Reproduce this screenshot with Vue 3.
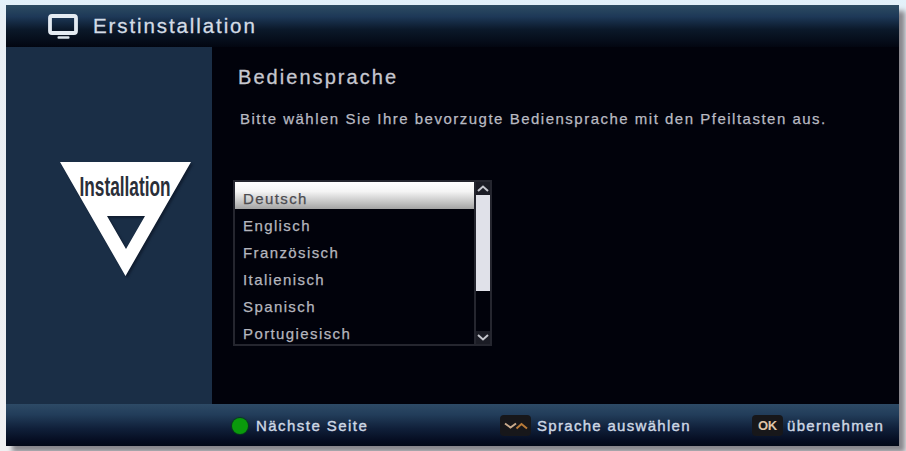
<template>
  <div class="page">
    <div class="screen">
      <header class="top-bar">
        <svg class="tv-icon" viewBox="0 0 30 26" width="30" height="26">
          <rect x="2" y="2" width="26" height="17" rx="2" fill="none" stroke="#e4ebf2" stroke-width="3.8" />
          <rect x="9.5" y="22.2" width="12" height="2.6" rx="1" fill="#dbe3ea" />
        </svg>
        <h1>Erstinstallation</h1>
      </header>

      <div class="body">
        <aside class="sidebar">
          <svg class="logo" viewBox="0 0 140 124" width="140" height="124">
            <path class="logo-shape" d="M5 5H136L70.500 119ZM52 59L71 92L90 59Z" fill="#fff" fill-rule="evenodd" />
            <text x="24.5" y="39" textLength="91" lengthAdjust="spacingAndGlyphs">Installation</text>
          </svg>
        </aside>

        <main class="content">
          <h2>Bediensprache</h2>
          <p class="hint">Bitte wählen Sie Ihre bevorzugte Bediensprache mit den Pfeiltasten aus.</p>

          <div class="list-box">
            <ul class="languages">
              <li
                v-for="(lang, index) in languages"
                :key="lang"
                :class="{ active: index === selected }"
                @click="selected = index"
              >
                {{ lang }}
              </li>
            </ul>
            <div class="scrollbar">
              <svg viewBox="0 0 14 13" width="14" height="13">
                <path d="M2 9L7 4.500L12 9" />
              </svg>
              <div class="track">
                <div class="thumb"></div>
              </div>
              <svg viewBox="0 0 14 13" width="14" height="13">
                <path d="M2 4L7 8.500L12 4" />
              </svg>
            </div>
          </div>
        </main>
      </div>

      <footer class="bottom-bar">
        <div class="action next">
          <span class="dot"></span>
          <span class="label">Nächste Seite</span>
        </div>
        <div class="action choose">
          <span class="key">
            <svg viewBox="0 0 24 10" width="24" height="10">
              <path d="M1 2.500L6.500 6.500L12 2.500" stroke="#c9aa8c" />
              <path d="M12.500 7.500L17.500 3L23 7.500" stroke="#b87a38" />
            </svg>
          </span>
          <span class="label">Sprache auswählen</span>
        </div>
        <div class="action accept">
          <span class="key ok">OK</span>
          <span class="label">übernehmen</span>
        </div>
      </footer>
    </div>
  </div>
</template>

<script setup>
import { ref, onMounted, onUnmounted } from 'vue'

const languages = ['Deutsch', 'Englisch', 'Französisch', 'Italienisch', 'Spanisch', 'Portugiesisch']
const selected = ref(0)

function handleKeydown(event) {
  if (event.key === 'ArrowDown') {
    selected.value = Math.min(selected.value + 1, languages.length - 1)
  } else if (event.key === 'ArrowUp') {
    selected.value = Math.max(selected.value - 1, 0)
  }
}

onMounted(() => {
  document.addEventListener('keydown', handleKeydown)
})

onUnmounted(() => {
  document.removeEventListener('keydown', handleKeydown)
})
</script>

<style>
body {
  margin: 0;
  overflow: hidden;
}
</style>

<style scoped>
.page {
  box-sizing: border-box;
  width: 906px;
  height: 451px;
  padding: 5px 7px 5px 6px;
  overflow: hidden;
  background: linear-gradient(180deg, #e2f1fa 0, #e8eef4 20px, #f0f0f2 100%);
  font-family: "Liberation Sans", Arial, sans-serif;
}

.screen {
  display: flex;
  flex-direction: column;
  width: 893px;
  height: 441px;
  background: #01020b;
  box-shadow: 6px 6px 5px 0 #88868c;
}

.top-bar {
  display: flex;
  align-items: flex-start;
  height: 42px;
  background: linear-gradient(180deg, #2d4c62 0%, #1d3857 28%, #0b192a 58%, #020611 100%);
}

.tv-icon {
  margin: 9px 0 0 42px;
}

h1 {
  margin: 9px 0 0 15px;
  font-size: 20.5px;
  font-weight: 400;
  line-height: 24px;
  letter-spacing: 1.9px;
  color: #d3dce6;
  -webkit-text-stroke: 0.3px #d3dce6;
}

.body {
  display: flex;
  height: 357px;
}

.sidebar {
  width: 206px;
  background: #1a2e46;
}

.logo {
  display: block;
  margin: 110px 0 0 49px;
}

.logo-shape {
  filter: drop-shadow(2px 2px 1px #101d30);
}

.logo text {
  font-family: "Liberation Sans", Arial, sans-serif;
  font-size: 27px;
  font-weight: 700;
  fill: #2a2e38;
}

.content {
  flex: 1;
  padding-left: 21px;
}

h2 {
  margin: 18px 0 0 5px;
  font-size: 20px;
  font-weight: 400;
  line-height: 24px;
  letter-spacing: 2.05px;
  color: #c6c7cf;
  -webkit-text-stroke: 0.3px #c6c7cf;
}

.hint {
  margin: 20px 0 0 7px;
  font-size: 15px;
  line-height: 20px;
  letter-spacing: 1.5px;
  white-space: nowrap;
  color: #b9bac2;
  -webkit-text-stroke: 0.25px #b9bac2;
}

.list-box {
  display: flex;
  box-sizing: border-box;
  width: 259px;
  height: 166px;
  margin-top: 51px;
  border: 2px solid #25262f;
}

.languages {
  flex: 1;
  margin: 0;
  padding: 0;
  list-style: none;
}

.languages li {
  height: 27px;
  padding-left: 8px;
  font-size: 15px;
  line-height: 33px;
  letter-spacing: 1.4px;
  color: #b5b6be;
  -webkit-text-stroke: 0.25px currentColor;
}

.languages li.active {
  background: linear-gradient(180deg, #fff 0%, #f4f4f4 35%, #c4c4c4 75%, #a3a3a3 100%);
  color: #4b4b50;
}

.scrollbar {
  display: flex;
  flex-direction: column;
  width: 14px;
  border-left: 2px solid #25262f;
}

.scrollbar svg {
  flex: none;
  background: #1b1c25;
}

.scrollbar path {
  fill: none;
  stroke: #c4c5cc;
  stroke-width: 2;
}

.track {
  flex: 1;
}

.thumb {
  height: 96px;
  background: #e0e1e9;
}

.bottom-bar {
  display: flex;
  box-sizing: border-box;
  height: 42px;
  background: linear-gradient(180deg, #2d4a66 0%, #223d5a 25%, #10203a 58%, #050c20 88%, #030817 100%);
}

.action {
  display: flex;
  align-items: center;
  height: 43px;
}

.label {
  font-size: 15px;
  font-weight: 400;
  letter-spacing: 1.3px;
  white-space: nowrap;
  color: #cdd7e4;
  -webkit-text-stroke: 0.4px #cdd7e4;
}

.next {
  width: 268px;
  padding-left: 226px;
}

.next .label {
  letter-spacing: 1.45px;
}

.dot {
  width: 16px;
  height: 16px;
  margin-right: 8px;
  border-radius: 50%;
  background: #0a9a0c;
  box-shadow: 0 0 1px 1px #063b1c;
}

.choose {
  width: 252px;
}

.key {
  display: flex;
  align-items: center;
  justify-content: center;
  width: 31px;
  height: 21px;
  margin-right: 6px;
  border-radius: 4px;
  background: #17171a;
}

.key path {
  fill: none;
  stroke-width: 2;
}

.ok {
  margin-right: 4px;
  font-size: 13px;
  font-weight: 700;
  letter-spacing: -0.3px;
  color: #dfc4a8;
}
</style>
